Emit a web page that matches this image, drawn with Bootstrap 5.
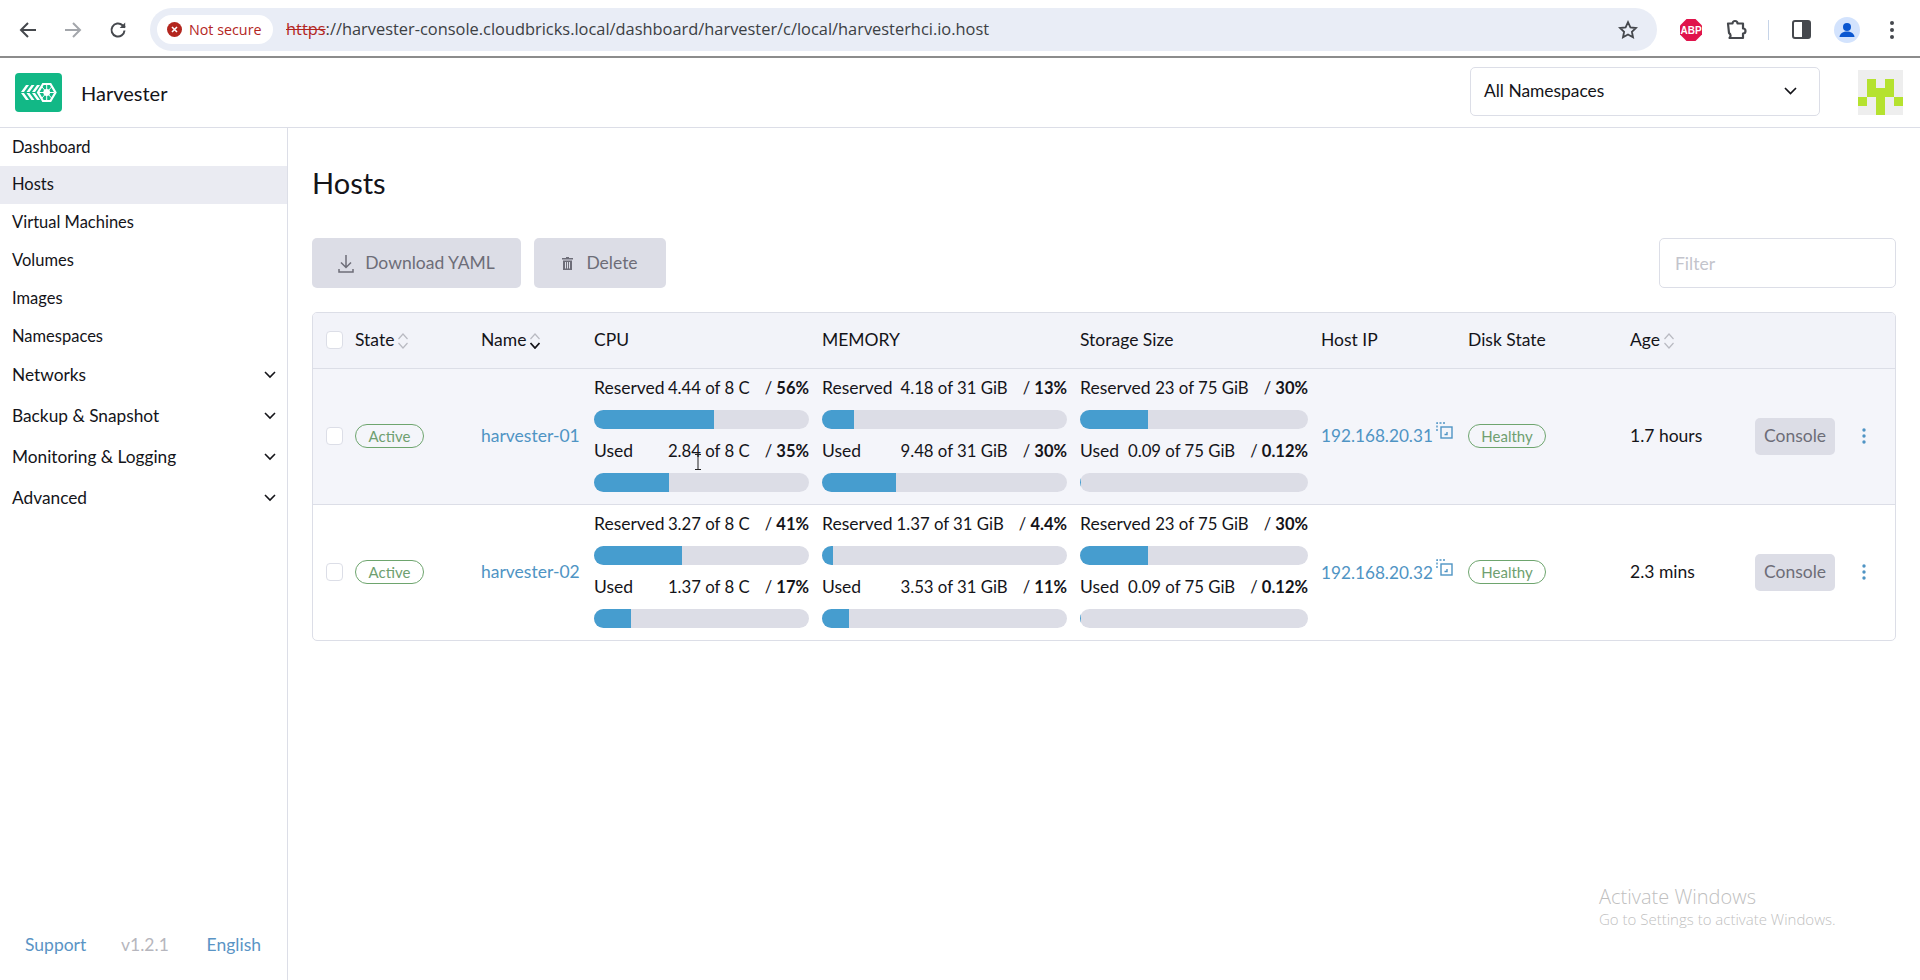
<!DOCTYPE html>
<html>
<head>
  <meta charset="UTF-8">
  <title>Harvester - Hosts</title>
  <link href="https://cdn.jsdelivr.net/npm/bootstrap@5.3.2/dist/css/bootstrap.min.css" rel="stylesheet">
  <style>
    html, body { height: 100%; overflow: hidden; }
    body { font-family: Lato, "Liberation Sans", sans-serif; color: #141419; background: #fff; }
    .app-shell { height: 980px; position: relative; }

    /* browser bar */
    .browser-bar { height: 58px; border-bottom: 2px solid #8c8c8c; padding: 8px 0 0 0; font-family: "Open Sans", "Liberation Sans", sans-serif; }
    .tool-slot { width: 45px; height: 43px; flex: none; }
    .nav-slots { margin-left: 5px; margin-right: 10px; }
    .url-pill { width: 1507px; height: 43px; border-radius: 22px; background: #e9edf6; padding-left: 7px; padding-right: 19px; flex: none; }
    .secure-chip { width: 116px; height: 29px; border-radius: 15px; background: #fff; color: #b3261e; font-size: 14.3px; padding-left: 10px; gap: 7px; flex: none; white-space: nowrap; }
    .url-text { margin-left: 13px; font-size: 16.4px; color: #3c4043; white-space: nowrap; }
    .url-text s { color: #b3261e; text-decoration-thickness: 1px; }
    .ext-row { margin-left: 11px; }
    .ext-slot { width: 45px; height: 43px; flex: none; }
    .ext-sep { width: 1px; height: 20px; background: #c6d4e8; margin: 0 10px; flex: none; }

    /* app header */
    .top-header { height: 70px; border-bottom: 1px solid #dcdee7; padding: 0 17px 0 15px; }
    .brand-logo { width: 47px; height: 39px; flex: none; }
    .brand-name { margin-left: 19px; font-size: 20px; }
    .ns-select { width: 350px; height: 49px; border: 1px solid #dcdee7; border-radius: 5px; padding: 0 22px 0 13px; margin: 0 38px 3px auto; font-size: 17.4px; }
    .avatar-box { width: 45px; height: 45px; flex: none; }

    /* sidebar */
    .body-row { height: 852px; }
    .side-col { width: 288px; flex: none; border-right: 1px solid #dcdee7; }
    .side-link { height: 37.8px; padding: 0 12px; font-size: 16.5px; color: #141419; text-decoration: none; display: flex; align-items: center; }
    .side-link.on { background: #eaebf2; }
    .side-group { height: 41px; padding: 0 11px 0 12px; font-size: 17.3px; color: #141419; text-decoration: none; display: flex; align-items: center; justify-content: space-between; }
    .side-foot { padding: 0 26px 22px 25px; font-size: 17.5px; }
    .side-foot a { color: #5a94c5; text-decoration: none; }
    .side-foot span { color: #b6b6bd; margin-right: 3px; }

    /* main */
    .main-col { padding: 0 24px; min-width: 0; }
    .page-title { font-size: 29px; font-weight: 400; line-height: 44px; margin: 33px 0 33px; }
    .grey-btn.btn:disabled { height: 50px; border: 0; border-radius: 5px; background: #dcdde6; color: #6d6d78; font-size: 17.5px; display: inline-flex; align-items: center; padding: 0; opacity: 1; }
    .grey-btn.btn-dl { width: 209px; justify-content: center; gap: 11px; }
    .grey-btn.btn-del { width: 132px; justify-content: center; gap: 13px; margin-left: 13px; font-size: 18px; }
    .filter-box { width: 237px; height: 50px; border: 1px solid #dcdee7; border-radius: 5px; padding: 0 15px; font-size: 17.5px; font-family: inherit; }
    .filter-box::placeholder { color: #c3c4cc; }

    .table-wrap { margin-top: 24px; border: 1px solid #dcdee7; border-radius: 5px; overflow: hidden; }
    .host-table { table-layout: fixed; width: 100%; margin: 0; font-size: 17.5px; }
    .host-table > * > tr > * { padding: 0; border-color: #dcdee7; vertical-align: middle; background: transparent; color: #141419; }
    .host-table thead tr { height: 55px; background: #f2f3f9; }
    .host-table thead th { font-weight: 400; white-space: nowrap; }
    .host-table tbody tr { height: 136px; }
    .host-table tbody tr.row-hover { background: #f4f5fa; }
    .host-table tbody tr:last-child > td { border-bottom: 0; }
    .host-table a { color: #4f94c4; text-decoration: none; }
    .tick-box { display: block; width: 17px; height: 18px; margin: 0 0 0 13px; border: 1px solid #dcdee7; border-radius: 4px; background: #fff; }
    .sort-mark { margin-left: 3px; vertical-align: -3px; }
    .state-tag { display: inline-block; height: 24px; line-height: 22px; border: 1px solid #6ea56e; border-radius: 12px; color: #6f9f70; font-size: 15px; background: #fff; text-align: center; }
    .row-hover .state-tag { background: #f4f5fa; }
    .tag-active { width: 69px; }
    .tag-healthy { width: 78px; }
    .host-table > tbody > tr > .metric-cell { padding: 7px 13px 0 0; }
    .metric-line { display: flex; height: 22px; line-height: 22px; white-space: nowrap; }
    .metric-line b { font-weight: 700; font-size: 16.5px; margin-left: 15px; }
    .metric-line i { font-style: normal; font-weight: 400; }
    .metric-val { margin-left: auto; font-size: 16.75px; }
    .metric-bar { height: 19px; border-radius: 9.5px; background: #dcdde6; margin: 11px 0 11px; }
    .metric-bar .progress-bar { background: #469dcf; }
    .ip-text { font-size: 17.2px; }
    .ip-icon { vertical-align: 3px; margin-left: 3px; }
    .console-btn { width: 80px; height: 37px; border: 0; border-radius: 5px; background: #dcdde6; color: #6d6d78; font-size: 17.5px; padding: 0; }
    .kebab-dots { display: block; margin-left: 12px; }
    .pointer-mark { position: absolute; left: 694px; top: 454px; }

    .win-mark { position: absolute; left: 1599px; top: 887px; color: #bfbfbf; font-family: "Open Sans", "Liberation Sans", sans-serif; font-weight: 300; line-height: 1; pointer-events: none; }
    .win-mark div:first-child { font-size: 20px; margin-bottom: 5px; }
    .win-mark div:last-child { font-size: 15px; }
  </style>
</head>
<body>
  <div class="app-shell d-flex flex-column">

    <div class="browser-bar d-flex align-items-start">
      <div class="d-flex nav-slots">
        <div class="tool-slot d-flex align-items-center justify-content-center">
          <svg width="18" height="18" viewBox="0 0 18 18" fill="none" stroke="#45484d" stroke-width="2"><path d="M17 9H2M9 2L2 9l7 7"/></svg>
        </div>
        <div class="tool-slot d-flex align-items-center justify-content-center">
          <svg width="18" height="18" viewBox="0 0 18 18" fill="none" stroke="#a3a6ab" stroke-width="2"><path d="M1 9h15M9 2l7 7-7 7"/></svg>
        </div>
        <div class="tool-slot d-flex align-items-center justify-content-center">
          <svg width="18" height="18" viewBox="0 0 18 18" fill="none" stroke="#45484d" stroke-width="2"><path d="M15.5 9.5a6.5 6.5 0 1 1-2-5.2L16 6.5"/><path d="M16.2 1.5v5.5h-5.500" stroke="none" fill="#45484d"/></svg>
        </div>
      </div>
      <div class="url-pill d-flex align-items-center">
        <div class="secure-chip d-flex align-items-center">
          <svg width="15" height="15" viewBox="0 0 15 15"><circle cx="7.5" cy="7.5" r="7.5" fill="#b3261e"/><path d="M5 5l5 5M10 5l-5 5" stroke="#fff" stroke-width="1.6"/></svg>
          <span>Not secure</span>
        </div>
        <div class="url-text"><s>https</s>://harvester-console.cloudbricks.local/dashboard/harvester/c/local/harvesterhci.io.host</div>
        <svg class="ms-auto" width="20" height="20" viewBox="0 0 20 20" fill="none" stroke="#45484d" stroke-width="1.8"><path d="M10 2.2l2.4 5.1 5.6.7-4.1 3.800 1.100 5.500-5-2.800-5 2.800 1.100-5.500L2 8l5.600-.7z"/></svg>
      </div>
      <div class="d-flex align-items-center ext-row">
        <div class="ext-slot d-flex align-items-center justify-content-center">
          <svg width="22" height="22" viewBox="0 0 22 22"><path d="M6.500 0h9L22 6.500v9L15.500 22h-9L0 15.500v-9z" fill="#e0144c"/><text x="11" y="14.800" text-anchor="middle" font-family="Liberation Sans" font-size="10" font-weight="700" fill="#fff">ABP</text></svg>
        </div>
        <div class="ext-slot d-flex align-items-center justify-content-center">
          <svg width="22" height="22" viewBox="0 0 22 22" fill="none" stroke="#45484d" stroke-width="2.200" stroke-linejoin="round"><path d="M3 4.500h4.500a2.500 2.500 0 0 1 5 0H18v5a2.500 2.500 0 0 1 0 5V19H4.500c1.500-1.500 1.500-3.500-.5-5z"/></svg>
        </div>
        <div class="ext-sep"></div>
        <div class="ext-slot d-flex align-items-center justify-content-center">
          <svg width="19" height="19" viewBox="0 0 19 19"><rect x="1" y="1" width="17" height="17" rx="2" fill="none" stroke="#45484d" stroke-width="2"/><rect x="10" y="1" width="8" height="17" fill="#45484d"/></svg>
        </div>
        <div class="ext-slot d-flex align-items-center justify-content-center">
          <svg width="26" height="26" viewBox="0 0 26 26"><circle cx="13" cy="13" r="13" fill="#d3e3fd"/><circle cx="13" cy="10" r="4" fill="#0b57d0"/><path d="M5.500 20c.5-4 4-5.500 7.500-5.500s7 1.500 7.500 5.500z" fill="#0b57d0"/></svg>
        </div>
        <div class="ext-slot d-flex align-items-center justify-content-center">
          <svg width="4" height="18" viewBox="0 0 4 18" fill="#45484d"><circle cx="2" cy="2" r="2"/><circle cx="2" cy="9" r="2"/><circle cx="2" cy="16" r="2"/></svg>
        </div>
      </div>
    </div>

    <header class="top-header d-flex align-items-center">
      <svg class="brand-logo" viewBox="0 0 47 39">
        <rect width="47" height="39" rx="4" fill="#12b886"/>
        <g fill="#fff">
          <path d="M6 19l5-7h3l-5 7zM11.500 19l5-7h3l-5 7zM17 19l5-7h3l-5 7z"/>
          <path d="M6 20l5 7h3l-5-7zM11.500 20l5 7h3l-5-7zM17 20l5 7h3l-5-7z"/>
        </g>
        <path d="M28 11h7.500l5 8.500-5 8.500H28l-5-8.500z" fill="none" stroke="#fff" stroke-width="2.200"/>
        <circle cx="31.700" cy="19.500" r="3.400" fill="#fff"/>
        <path d="M31.700 11v17M24 19.500h15M27 14l9.500 11M36.500 14L27 25" stroke="#fff" stroke-width="1"/>
      </svg>
      <div class="brand-name">Harvester</div>
      <div class="ns-select d-flex align-items-center justify-content-between">
        <span>All Namespaces</span>
        <svg width="13" height="8" viewBox="0 0 13 8" fill="none" stroke="#141419" stroke-width="1.700"><path d="M1 1l5.500 5.500L12 1"/></svg>
      </div>
      <svg class="avatar-box" viewBox="0 0 5 5" shape-rendering="crispEdges">
        <rect width="5" height="5" fill="#eeeeee"/>
        <g fill="#b5e22f">
          <rect x="1" y="1" width="1" height="2"/><rect x="3" y="1" width="1" height="2"/>
          <rect x="2" y="2" width="1" height="3"/>
          <rect x="0" y="3" width="1" height="1"/><rect x="4" y="3" width="1" height="1"/>
        </g>
      </svg>
    </header>

    <div class="body-row d-flex">
      <aside class="side-col d-flex flex-column">
        <nav id="sideNav" class="flex-grow-1"></nav>
        <div class="side-foot d-flex justify-content-between">
          <a href="#">Support</a><span>v1.2.1</span><a href="#">English</a>
        </div>
      </aside>

      <main class="main-col flex-grow-1">
        <h1 class="page-title">Hosts</h1>
        <div class="d-flex align-items-center">
          <button class="btn grey-btn btn-dl" disabled>
            <svg width="16" height="19" viewBox="0 0 16 19" fill="none" stroke="#6d6d78" stroke-width="1.500"><path d="M8 1v12M3 8.500l5 5 5-5M1 15v3h14v-3"/></svg>
            Download YAML
          </button>
          <button class="btn grey-btn btn-del" disabled>
            <svg width="11" height="13" viewBox="0 0 11 13" fill="#6d6d78"><path d="M4 0h3v1h4v1.500H0V1h4zM1 3.500h9V13H1zM3 5v6.500h1V5zm2 0v6.500h1V5zm2 0v6.500h1V5z"/></svg>
            Delete
          </button>
          <input class="filter-box ms-auto" type="text" placeholder="Filter">
        </div>

        <div class="table-wrap">
          <table class="table host-table">
            <colgroup>
              <col style="width:42px"><col style="width:126px"><col style="width:113px"><col style="width:228px"><col style="width:258px">
              <col style="width:241px"><col style="width:147px"><col style="width:162px"><col style="width:125px"><col style="width:95px"><col>
            </colgroup>
            <thead>
              <tr id="headRow"></tr>
            </thead>
            <tbody id="hostRows"></tbody>
          </table>
        </div>
      </main>
    </div>

    <svg class="pointer-mark" width="8" height="16" viewBox="0 0 8 16" fill="none" stroke="#222" stroke-width="1"><path d="M1 .5h6M4 .5v15M1 15.500h6"/></svg>

    <div class="win-mark">
      <div>Activate Windows</div>
      <div>Go to Settings to activate Windows.</div>
    </div>
  </div>

  <script src="https://cdn.jsdelivr.net/npm/bootstrap@5.3.2/dist/js/bootstrap.bundle.min.js"></script>
  <script>
    const sideLinks = ["Dashboard", "Hosts", "Virtual Machines", "Volumes", "Images", "Namespaces"];
    const sideGroups = ["Networks", "Backup &amp; Snapshot", "Monitoring &amp; Logging", "Advanced"];
    const chevron = `<svg width="12" height="8" viewBox="0 0 12 8" fill="none" stroke="#141419" stroke-width="1.600"><path d="M1 1l5 5 5-5"/></svg>`;

    document.getElementById("sideNav").innerHTML =
      sideLinks.map(n => `<a href="#" class="side-link ${n === "Hosts" ? "on" : ""}">${n}</a>`).join("") +
      sideGroups.map(n => `<a href="#" class="side-group"><span>${n}</span>${chevron}</a>`).join("");

    function sortMark(active) {
      const low = active ? "#141419" : "#b9bac2";
      const lowWidth = active ? 1.8 : 1.2;
      return `<svg class="sort-mark" width="12" height="16" viewBox="0 0 12 16" fill="none"><path d="M1.500 6l4.500-5 4.500 5" stroke="#b9bac2" stroke-width="1.200"/><path d="M1.500 10l4.500 5 4.500-5" stroke="${low}" stroke-width="${lowWidth}"/></svg>`;
    }

    document.getElementById("headRow").innerHTML = `
      <th><span class="tick-box"></span></th>
      <th>State${sortMark(false)}</th>
      <th>Name${sortMark(true)}</th>
      <th>CPU</th><th>MEMORY</th><th>Storage Size</th><th>Host IP</th><th>Disk State</th>
      <th>Age${sortMark(false)}</th><th></th><th></th>`;

    const hosts = [
      { name: "harvester-01", ip: "192.168.20.31", age: "1.7 hours", hover: true,
        cpu: [["4.44 of 8 C", "56%", 56], ["2.84 of 8 C", "35%", 35]],
        mem: [["4.18 of 31 GiB", "13%", 13], ["9.48 of 31 GiB", "30%", 30]],
        disk: [["23 of 75 GiB", "30%", 30], ["0.09 of 75 GiB", "0.12%", 0.5]] },
      { name: "harvester-02", ip: "192.168.20.32", age: "2.3 mins", hover: false,
        cpu: [["3.27 of 8 C", "41%", 41], ["1.37 of 8 C", "17%", 17]],
        mem: [["1.37 of 31 GiB", "4.4%", 4.4], ["3.53 of 31 GiB", "11%", 11]],
        disk: [["23 of 75 GiB", "30%", 30], ["0.09 of 75 GiB", "0.12%", 0.5]] }
    ];

    function metricCell(pair) {
      const labels = ["Reserved", "Used"];
      return `<td class="metric-cell">` + pair.map((m, i) => `
        <div class="metric-line"><span>${labels[i]}</span><span class="metric-val">${m[0]}</span><b><i>/ </i>${m[1]}</b></div>
        <div class="progress metric-bar"><div class="progress-bar" style="width:${m[2]}%"></div></div>`).join("") + `</td>`;
    }

    document.getElementById("hostRows").innerHTML = hosts.map(h => `
      <tr class="${h.hover ? "row-hover" : ""}">
        <td><span class="tick-box"></span></td>
        <td><span class="state-tag tag-active">Active</span></td>
        <td><a href="#">${h.name}</a></td>
        ${metricCell(h.cpu)}${metricCell(h.mem)}${metricCell(h.disk)}
        <td class="text-nowrap"><a class="ip-text" href="#">${h.ip}</a><svg class="ip-icon" width="17" height="17" viewBox="0 0 17 17" fill="none" stroke="#4f94c4" stroke-width="1.400"><path d="M1 9V1h9" stroke-dasharray="2 1.500"/><rect x="5" y="5" width="11" height="11"/><path d="M11 10v2.500H8.500"/></svg></td>
        <td><span class="state-tag tag-healthy">Healthy</span></td>
        <td>${h.age}</td>
        <td><button class="console-btn">Console</button></td>
        <td><svg class="kebab-dots" width="4" height="16" viewBox="0 0 4 16" fill="#4f94c4"><circle cx="2" cy="2" r="1.700"/><circle cx="2" cy="8" r="1.700"/><circle cx="2" cy="14" r="1.700"/></svg></td>
      </tr>`).join("");
  </script>
</body>
</html>
